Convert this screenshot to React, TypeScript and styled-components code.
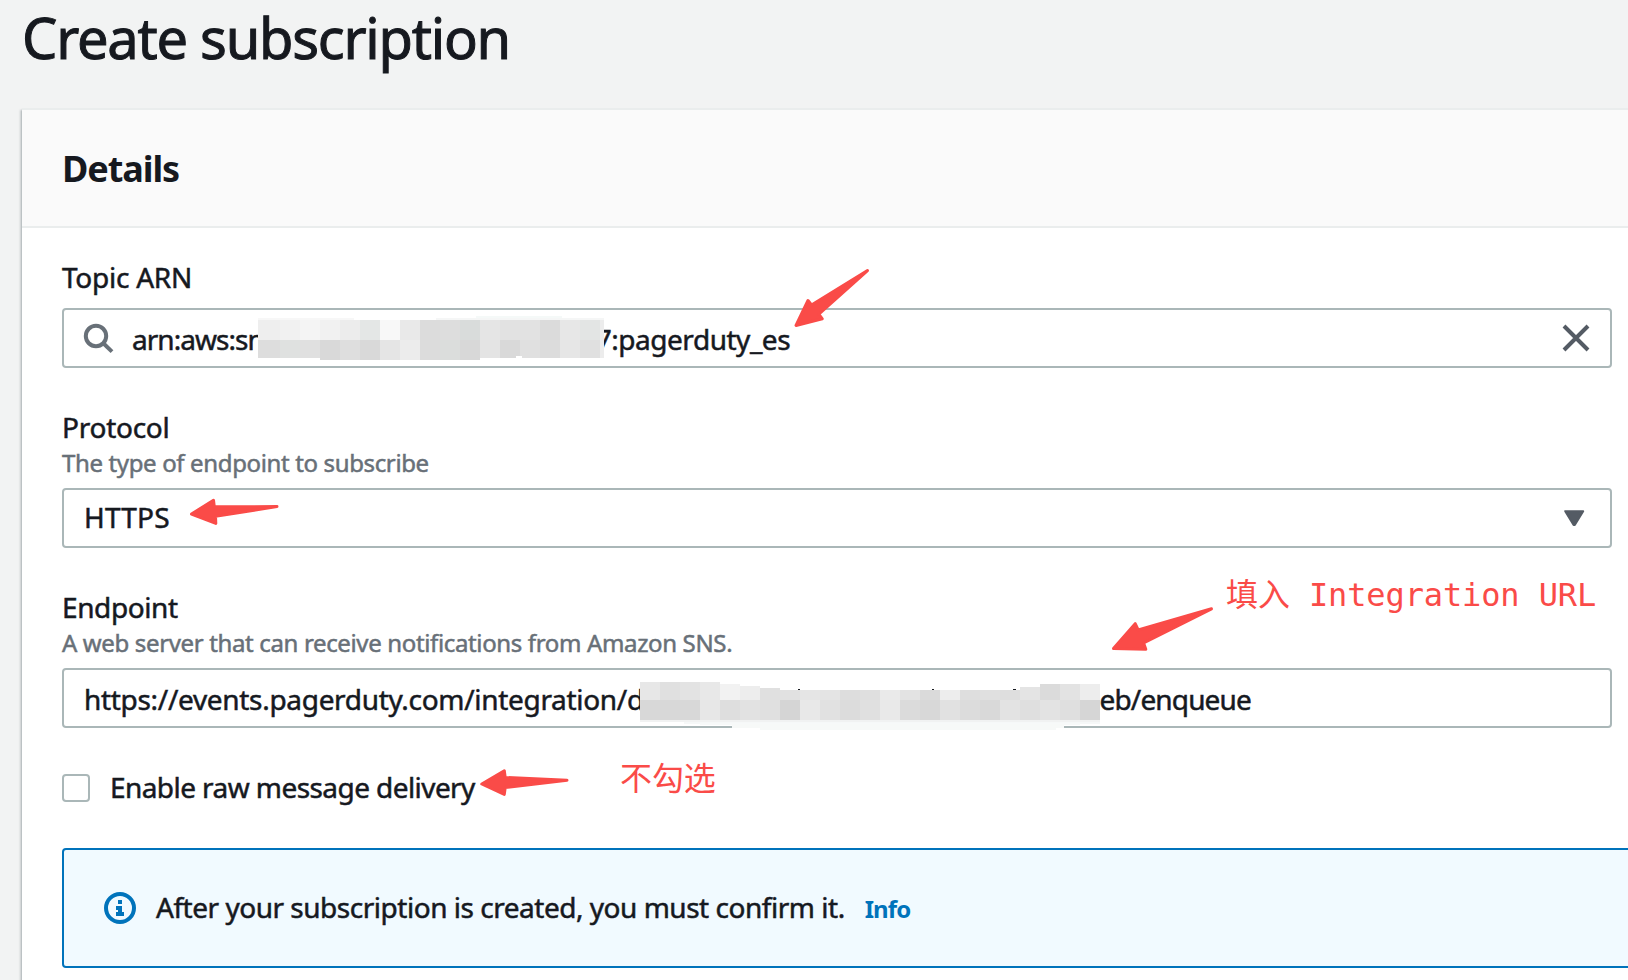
import React from 'react';
import styled, { createGlobalStyle } from 'styled-components';

const GlobalStyle = createGlobalStyle`
  * { box-sizing: border-box; }
  body {
    margin: 0;
    overflow: hidden;
    background: #f2f3f3;
    color: #16191f;
    font-family: "Noto Sans", "Noto Sans CJK SC", sans-serif;
    font-size: 28px;
  }
`;

const Page = styled.div`
  position: relative;
  width: 1628px;
  height: 980px;
  overflow: hidden;
`;

const PageTitle = styled.h1`
  margin: 0;
  padding: 1px 0 0 22px;
  height: 108px;
  font-size: 56px;
  font-weight: 400;
  line-height: 72px;
  letter-spacing: -1.24px;
  -webkit-text-stroke: 1px currentColor;
`;

const Card = styled.section`
  margin-left: 22px;
  width: 1660px;
  height: 920px;
  background: #fff;
  border-top: 2px solid #eaeded;
  box-shadow: 0 2px 2px rgba(0, 28, 36, 0.3), 2px 2px 2px rgba(0, 28, 36, 0.15),
    -2px 2px 2px rgba(0, 28, 36, 0.15);
`;

const CardHeader = styled.header`
  display: flex;
  align-items: center;
  height: 118px;
  padding: 2px 0 0 40px;
  background: #fafafa;
  border-bottom: 2px solid #eaeded;
`;

const CardTitle = styled.h2`
  margin: 0;
  font-size: 36px;
  font-weight: 700;
  line-height: 44px;
  letter-spacing: -1.08px;
`;

const CardBody = styled.div`
  display: flex;
  flex-direction: column;
  padding: 31px 0 0 40px;
`;

const Field = styled.div<{ $last?: boolean }>`
  display: flex;
  flex-direction: column;
  width: 1550px;
  margin-bottom: ${(p) => (p.$last ? 46 : 41)}px;
`;

const Text = styled.span<{ $spacing?: number }>`
  white-space: pre;
  line-height: 36px;
  letter-spacing: ${(p) => p.$spacing ?? 0}px;
  -webkit-text-stroke: 0.5px currentColor;
`;

const Hint = styled(Text)`
  font-size: 24px;
  color: #687078;
`;

const InputBox = styled.div<{ $gap: number; $shift?: number }>`
  display: flex;
  align-items: center;
  height: 60px;
  margin-top: ${(p) => p.$gap}px;
  padding: 0 18px 0 20px;
  background: #fff;
  border: 2px solid #aab7b8;
  border-radius: 4px;

  ${Text} {
    position: relative;
    top: ${(p) => p.$shift ?? 1}px;
  }
`;

const SearchIcon = styled.svg`
  flex: none;
  width: 32px;
  height: 32px;
  margin: 0 18px 0 -2px;
`;

const TrailingIcon = styled.svg<{ $size: number; $right: number }>`
  flex: none;
  width: ${(p) => p.$size}px;
  height: ${(p) => p.$size}px;
  margin-left: auto;
  margin-right: ${(p) => p.$right}px;
`;

const Leading = styled.span<{ $width: number }>`
  flex: none;
  width: ${(p) => p.$width}px;
  white-space: nowrap;
`;

const Trailing = styled.span<{ $offset: number }>`
  margin-left: ${(p) => p.$offset}px;
  white-space: nowrap;
`;

const MosaicSvg = styled.svg`
  flex: none;
  position: relative;
  z-index: 1;
  overflow: visible;
`;

const CheckboxRow = styled.label`
  display: flex;
  align-items: center;
  height: 28px;
  margin-bottom: 46px;

  ${Text} {
    margin-top: -2px;
  }
`;

const Checkbox = styled.span`
  width: 28px;
  height: 28px;
  margin-right: 20px;
  border: 2px solid #aab7b8;
  border-radius: 4px;
`;

const Alert = styled.div`
  display: flex;
  align-items: center;
  height: 120px;
  padding-left: 40px;
  background: #f1faff;
  border: 2px solid #0073bb;
  border-radius: 4px;

  ${Text} {
    margin-top: -2px;
  }
`;

const InfoIcon = styled.svg`
  width: 32px;
  height: 32px;
  margin-right: 20px;
`;

const InfoLink = styled.a`
  margin: 1px 0 0 20px;
  color: #0073bb;
  font-size: 24px;
  font-weight: 700;
  letter-spacing: -0.9px;
`;

const ArrowLayer = styled.svg`
  position: absolute;
  inset: 0;
  z-index: 2;
  pointer-events: none;
`;

const Note = styled.span<{ $x: number; $y: number }>`
  position: absolute;
  left: ${(p) => p.$x}px;
  top: ${(p) => p.$y}px;
  z-index: 2;
  white-space: pre;
  color: #fa4b48;
  font-family: "DejaVu Sans Mono", "Noto Sans CJK SC", monospace;
  font-size: 32px;
  line-height: 40px;
  letter-spacing: -0.12px;
`;

type Cell = [x: number, y: number, w: number, h: number, fill: string];

const grey = (v: string) => `#${v}${v}${v}`;

const arnTop = ['#eeeeee', '#f1f1f1', '#f4f4f4', '#f1f1f1', '#ececec', '#e4e7e6', '#f8f8f8', '#e9e9e9', '#dcdcdc', '#dddddd', '#d9dcdb', '#e5e5e5', '#e2e2e2', '#e2e2e2', '#dbdbdb', '#e7e7e7', '#e3e5e4'];
const arnBottom = ['#dddddd', '#dfe1e0', '#e0e0e0', '#d9d9d9', '#dedede', '#d9d9d9', '#e5e5e5', '#ececec', '#dcdcdc', '#dbdddc', '#d8d8d8', '#e4e4e4', '#d9d9d9', '#e0e0e0', '#dcdcdc', '#e6e6e6', '#e0e0e0'];

const column = (i: number) => (i === 0 ? 0 : 2 + i * 20);

const arnCells: Cell[] = [
  [0, 0, 96, 2, '#f7f7f7'],
  [178, 0, 168, 2, '#f5f6f6'],
  [218, -2, 86, 2, '#f5f9f8'],
  ...arnTop.map((fill, i): Cell => [column(i), 2, i === 0 ? 22 : 20, 20, fill]),
  ...arnBottom.map((fill, i): Cell => [column(i), 22, i === 0 ? 22 : 20, i < 3 || i > 10 ? 18 : 20, fill]),
  [342, 2, 4, 38, '#ececec'],
  [258, 38, 6, 2, '#ffffff'],
];

const urlTop: [string, number][] = [
  ['e7', 0], ['e0', 0], ['e3', 0], ['e8', 0], ['f2', 2], ['ed', 4], ['e0', 6], ['e1', 8],
  ['e5', 8], ['e4', 8], ['dd', 8], ['df', 8], ['ea', 8], ['e3', 8], ['da', 8], ['ed', 8],
  ['de', 8], ['e0', 8], ['de', 8], ['e4', 5], ['db', 2], ['e3', 2], ['ed', 2],
];
const urlBottom = ['d8', 'd8', 'd8', 'e7', 'de', 'e2', 'e0', 'd5', 'e8', 'e1', 'dc', 'e0', 'e9', 'db', 'd8', 'e1', 'dc', 'd9', 'e3', 'df', 'e3', 'df', 'd6'];

const urlCells: Cell[] = [
  [0, 38, 460, 2, '#f1f2f2'],
  [44, 40, 416, 2, '#f6f8f8'],
  [60, 41, 380, 2, '#f7f9f9'],
  [92, 42, 332, 4, '#f7f9f8'],
  [120, 46, 296, 2, '#f7f9f8'],
  ...urlTop.map(([v, top], i): Cell => [i * 20, top, 20, 18 - top, grey(v)]),
  ...urlBottom.map((v, i): Cell => [i * 20, 18, 20, 20, grey(v)]),
  [158, 7, 2, 1, '#16191f'],
  [292, 7, 2, 1, '#16191f'],
  [373, 7, 3, 1, '#16191f'],
];

const Mosaic = ({ cells, width, height }: { cells: Cell[]; width: number; height: number }) => (
  <MosaicSvg width={width} height={height} shapeRendering="crispEdges">
    {cells.map(([x, y, w, h, fill], i) => (
      <rect key={i} x={x} y={y} width={w} height={h} fill={fill} />
    ))}
  </MosaicSvg>
);

const arrows = [
  'M796 325.5 L808 300.5 L811.5 305 L867.5 270.6 L818.8 314.2 L822.3 318.8 Z',
  'M191.5 514 L213.5 500.3 L214.3 506.8 L277 506.6 L215.5 516.3 L215.8 523.4 Z',
  'M1113.5 648.6 L1135.2 623.7 L1138.2 630 L1211.5 608.8 L1143.6 643 L1145.8 649.3 Z',
  'M481.8 784 L504.3 770.8 L505.2 777.5 L567 780.2 L505.2 787.6 L504.3 794.4 Z',
];

export default function App() {
  return (
    <Page>
      <GlobalStyle />
      <PageTitle>Create subscription</PageTitle>
      <Card>
        <CardHeader>
          <CardTitle>Details</CardTitle>
        </CardHeader>
        <CardBody>
          <Field>
            <Text $spacing={-0.25}>Topic ARN</Text>
            <InputBox $gap={13}>
              <SearchIcon viewBox="0 0 32 32" fill="none" stroke="#687078" strokeWidth="4">
                <circle cx="14" cy="14" r="10.2" />
                <path d="M21.3 21.3 L30 29.6" />
              </SearchIcon>
              <Leading $width={126}>
                <Text $spacing={-0.95}>arn:aws:sn</Text>
              </Leading>
              <Mosaic cells={arnCells} width={346} height={40} />
              <Trailing $offset={-8.3}>
                <Text $spacing={-0.47}>7:pagerduty_es</Text>
              </Trailing>
              <TrailingIcon $size={28} $right={2} viewBox="0 0 28 28" stroke="#545b64" strokeWidth="4">
                <path d="M2 2 L26 26 M26 2 L2 26" />
              </TrailingIcon>
            </InputBox>
          </Field>

          <Field>
            <Text $spacing={-0.25}>Protocol</Text>
            <Hint $spacing={-0.36}>The type of endpoint to subscribe</Hint>
            <InputBox $gap={7} $shift={-1}>
              <Text $spacing={0.2}>HTTPS</Text>
              <TrailingIcon $size={22} $right={7} viewBox="0 0 22 22" fill="#545b64" stroke="#545b64" strokeWidth="2" strokeLinejoin="round">
                <path d="M2.2 4.2 H20.2 L11.8 18 H10.6 Z" />
              </TrailingIcon>
            </InputBox>
          </Field>

          <Field $last>
            <Text $spacing={-0.4}>Endpoint</Text>
            <Hint $spacing={-0.355}>A web server that can receive notifications from Amazon SNS.</Hint>
            <InputBox $gap={7}>
              <Leading $width={556}>
                <Text $spacing={-0.31}>https://events.pagerduty.com/integration/d</Text>
              </Leading>
              <Mosaic cells={urlCells} width={460} height={32} />
              <Trailing $offset={-0.5}>
                <Text $spacing={-0.85}>eb/enqueue</Text>
              </Trailing>
            </InputBox>
          </Field>

          <CheckboxRow>
            <Checkbox />
            <Text $spacing={-0.57}>Enable raw message delivery</Text>
          </CheckboxRow>

          <Alert>
            <InfoIcon viewBox="0 0 32 32" fill="none">
              <circle cx="16" cy="16" r="14" stroke="#0073bb" strokeWidth="4" />
              <path d="M14 8h4v4h-4z M12 14h6v6h2v4h-8v-4h2v-2h-2z" fill="#0073bb" />
            </InfoIcon>
            <Text $spacing={-0.48}>After your subscription is created, you must confirm it.</Text>
            <InfoLink>Info</InfoLink>
          </Alert>
        </CardBody>
      </Card>

      <ArrowLayer width="1628" height="980" fill="#fa4b48" stroke="#fa4b48" strokeWidth="3" strokeLinejoin="round">
        {arrows.map((d) => (
          <path key={d} d={d} />
        ))}
      </ArrowLayer>
      <Note $x={1226} $y={575}>填入 Integration URL</Note>
      <Note $x={620} $y={759}>不勾选</Note>
    </Page>
  );
}
